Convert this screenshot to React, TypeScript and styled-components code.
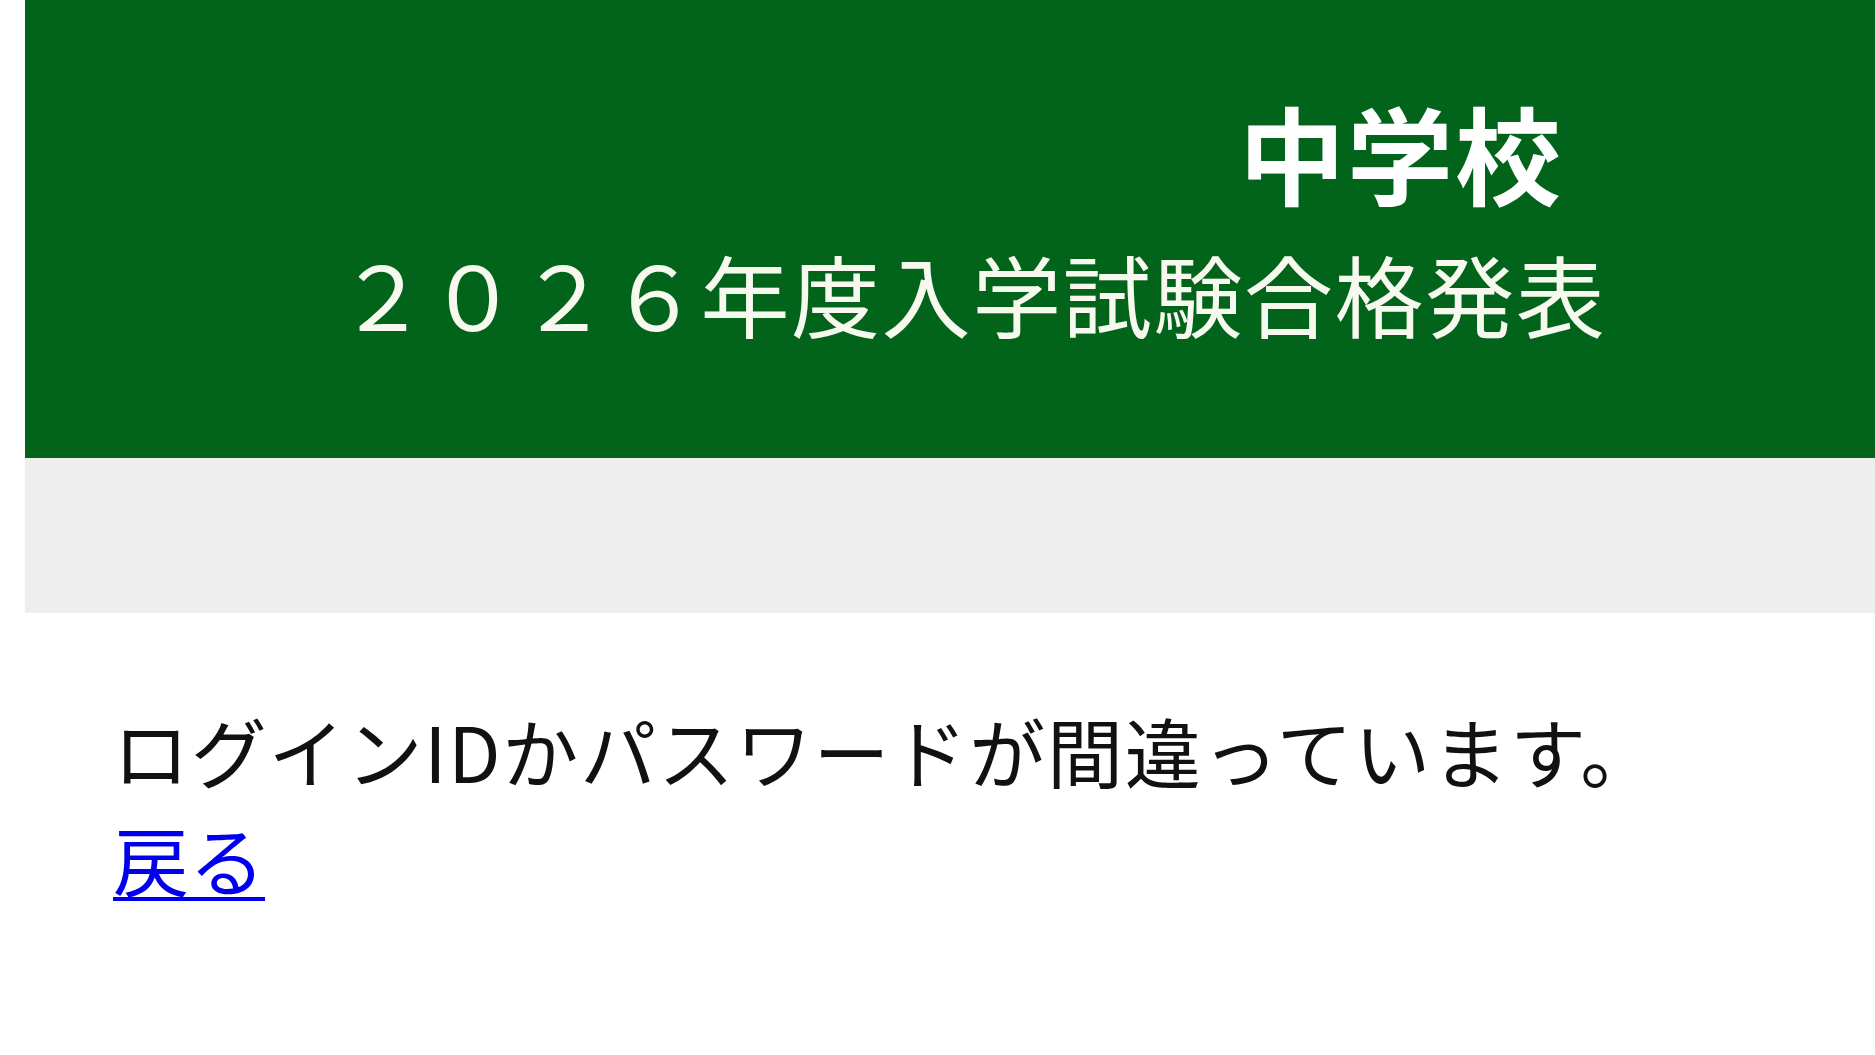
import React from "react";
import styled, { createGlobalStyle } from "styled-components";

const GlobalStyle = createGlobalStyle`
  html, body {
    margin: 0;
    padding: 0;
    background: #ffffff;
  }
  body {
    font-family: "Noto Sans CJK JP", "Noto Sans", sans-serif;
    color: #111111;
    overflow: hidden;
  }
`;

export const Page = styled.div`
  margin-left: 25px;
  min-height: 1055px;
`;

export const Header = styled.header`
  background-color: #02641b;
  height: 458px;
  box-sizing: border-box;
  padding-top: 86px;
  display: flex;
  flex-direction: column;
  align-items: flex-start;
`;

export const SchoolName = styled.h1`
  margin: 0 0 29px 1214px;
  font-size: 106px;
  line-height: 130px;
  font-weight: 700;
  color: #ffffff;
  letter-spacing: 2px;
  white-space: nowrap;
`;

export const Subtitle = styled.h2`
  margin: 0 0 0 313px;
  font-size: 89px;
  line-height: 96px;
  font-weight: 400;
  color: #f7f9ee;
  letter-spacing: 1.6px;
  white-space: nowrap;
`;

export const Band = styled.div`
  height: 155px;
  background-color: #eeeeee;
`;

export const Content = styled.main`
  padding: 83px 0 0 88px;
  font-size: 76px;
  line-height: 108px;
`;

export const Message = styled.p`
  margin: 0;
  letter-spacing: 1.8px;
  white-space: nowrap;
`;

export const BackLink = styled.a`
  color: #0000ee;
  text-decoration: underline;
  text-decoration-thickness: 4px;
  text-underline-offset: 6px;
`;

const App = () => {
  return (
    <>
      <GlobalStyle />
      <Page>
        <Header>
          <SchoolName>中学校</SchoolName>
          <Subtitle>２０２６年度入学試験合格発表</Subtitle>
        </Header>
        <Band />
        <Content>
          <Message>ログインIDかパスワードが間違っています。</Message>
          <BackLink href="#">戻る</BackLink>
        </Content>
      </Page>
    </>
  );
};

export default App;
